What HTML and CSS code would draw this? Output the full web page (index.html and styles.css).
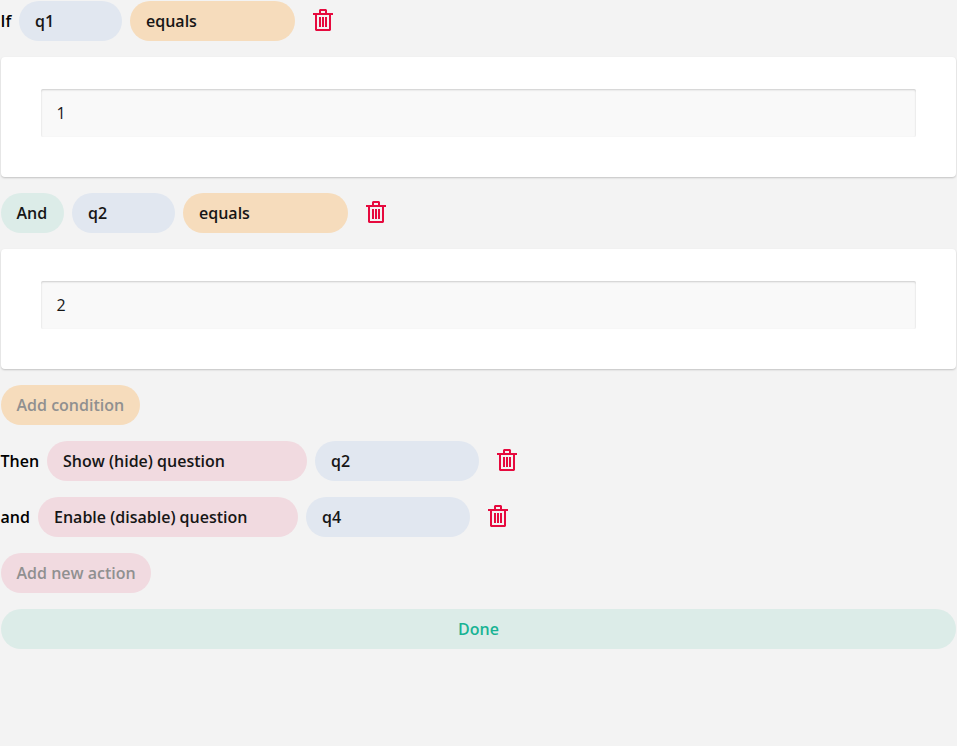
FILE: index.html
```html
<!DOCTYPE html>
<html lang="en">
<head>
<meta charset="utf-8">
<title>Logic</title>
<link rel="stylesheet" href="styles.css">
</head>
<body>
<svg class="sprite">
  <symbol id="trash" viewBox="0 0 20 22">
    <path d="M7 0h6l1 1v3h6v2h-2v15l-1 1H3l-1-1V6H0V4h6V1zM8 2v2h4V2zM4 6v14h12V6zM6 8h2v10H6zM9 8h2v10H9zM12 8h2v10h-2z" fill-rule="evenodd"/>
  </symbol>
</svg>
<main class="editor">
  <div class="row">
    <span class="if">If</span>
    <div class="pill question">q1</div>
    <div class="pill operator">equals</div>
    <button class="remove" aria-label="Remove"><svg><use href="#trash"/></svg></button>
  </div>
  <div class="panel"><div class="field">1</div></div>
  <div class="row">
    <div class="pill join">And</div>
    <div class="pill question">q2</div>
    <div class="pill operator">equals</div>
    <button class="remove" aria-label="Remove"><svg><use href="#trash"/></svg></button>
  </div>
  <div class="panel"><div class="field">2</div></div>
  <div class="row"><div class="pill add-condition">Add condition</div></div>
  <div class="row">
    <span class="then">Then</span>
    <div class="pill action">Show (hide) question</div>
    <div class="pill question wide">q2</div>
    <button class="remove" aria-label="Remove"><svg><use href="#trash"/></svg></button>
  </div>
  <div class="row">
    <span class="and">and</span>
    <div class="pill action">Enable (disable) question</div>
    <div class="pill question wide">q4</div>
    <button class="remove" aria-label="Remove"><svg><use href="#trash"/></svg></button>
  </div>
  <div class="row"><div class="pill add-action">Add new action</div></div>
  <button class="pill done">Done</button>
</main>
</body>
</html>
```
FILE: styles.css
```css
* { box-sizing: border-box; }
body {
  margin: 0;
  background: #f3f3f3;
  color: #000;
  font: 600 16px/24px "Open Sans", sans-serif;
}
.sprite { display: none; }
.editor {
  display: flex;
  flex-direction: column;
  gap: 16px;
  padding: 1px;
}
.row { display: flex; align-items: center; gap: 8px; height: 40px; }
.row > span { flex: none; text-indent: -0.5px; white-space: nowrap; }
.if { width: 10px; }
.then { width: 38px; }
.and { width: 29px; }
.pill {
  flex: none;
  height: 40px;
  padding: 8px 15.5px;
  border-radius: 20px;
  color: #161616;
  white-space: nowrap;
}
.question { width: 103px; background: #e1e7f0; }
.question.wide { width: 164px; }
.operator { width: 165px; background: #f6dcbc; }
.join { width: 63px; background: #dcece8; }
.action { width: 260px; background: #f1dae0; }
.add-condition { width: 139px; background: #f6dcbc; color: #909090; }
.add-action { width: 150px; background: #f1dae0; color: #909090; }
.question, .operator, .action { padding-left: 16px; }
.remove {
  width: 40px;
  height: 40px;
  padding: 8px 10px 10px;
  border: 0;
  background: none;
}
.remove svg { display: block; width: 20px; height: 22px; fill: #e60a3e; }
.panel {
  height: 120px;
  padding: 32px 40px;
  border-radius: 4px;
  background: #fff;
  box-shadow: 0 1px 2px rgba(0, 0, 0, .2);
}
.field {
  height: 48px;
  padding: 12px 15.5px;
  border-radius: 2px;
  background: #f9f9f9;
  box-shadow: inset 0 1px 2px rgba(0, 0, 0, .18);
  color: #161616;
  font-weight: 400;
}
.pill.done {
  border: 0;
  background: #dcece8;
  color: #19b394;
  font: inherit;
}
```
